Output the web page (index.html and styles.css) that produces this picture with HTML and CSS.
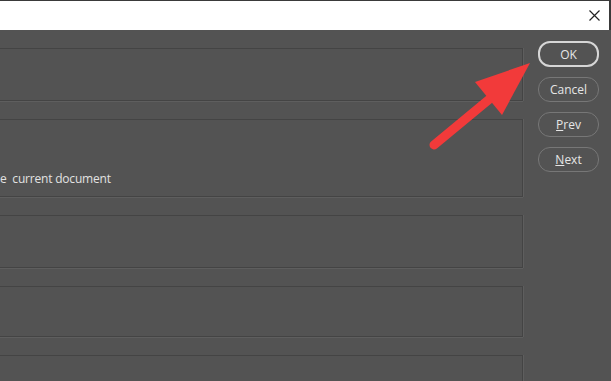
FILE: index.html
```html
<!DOCTYPE html>
<html lang="en">
<head>
    <meta charset="UTF-8">
    <title>Dialog</title>
    <link rel="stylesheet" href="styles.css">
</head>
<body>
<header class="titlebar">
    <svg class="close" width="11" height="11" viewBox="0 0 11 11">
        <path d="M0.5 0.5 L10.5 10.5 M10.5 0.5 L0.5 10.5" stroke="#222" stroke-width="1.2" fill="none"/>
    </svg>
</header>
<div class="dialog">
    <div class="groups">
        <div class="group g1"></div>
        <div class="group g2">
            <span class="label">e&nbsp; current document</span>
        </div>
        <div class="group g3"></div>
        <div class="group g4"></div>
        <div class="group g5"></div>
    </div>
    <div class="buttons">
        <button class="btn default">OK</button>
        <button class="btn">Cancel</button>
        <button class="btn"><u>P</u>rev</button>
        <button class="btn"><u>N</u>ext</button>
    </div>
    <!-- callout arrow pointing at OK -->
    <svg class="arrow" width="611" height="381" viewBox="0 0 611 381">
        <line x1="434" y1="145" x2="492" y2="97" stroke="#f23a3a" stroke-width="9" stroke-linecap="round"/>
        <polygon points="530,63 475,82 502,115" fill="#f23a3a"/>
    </svg>
</div>
</body>
</html>
```

FILE: styles.css
```css
body {
    margin: 0;
    width: 611px;
    height: 381px;
    overflow: hidden;
    background-color: #535353;
    font-family: "Open Sans", "Noto Sans", sans-serif;
    font-size: 12px;
    color: #e2e2e2;
}

.titlebar {
    height: 29px;
    background-color: #fff;
    border-top: 1px solid #3a3a3a;
    border-right: 2px solid #3a3a3a;
    display: flex;
    justify-content: flex-end;
    align-items: center;
    padding-right: 9px;
}

.dialog {
    display: flex;
    position: relative;
    height: 351px;
}

.groups {
    width: 523px;
    padding-top: 18px;
    display: flex;
    flex-direction: column;
    gap: 18px;
}

.group {
    border: 1px solid #444;
    border-left: none;
    box-shadow: 0 1px 0 #5e5e5e, 1px 0 0 #5e5e5e;
    box-sizing: border-box;
    flex-shrink: 0;
}

.g1 { height: 53px; }
.g2 {
    height: 78px;
    display: flex;
    align-items: flex-end;
    padding-bottom: 9px;
}
.g3 { height: 53px; }
.g4 { height: 51px; }
.g5 { height: 40px; }

.label {
    line-height: 16px;
    letter-spacing: -0.2px;
}

.buttons {
    margin-left: 15px;
    padding-top: 11px;
    display: flex;
    flex-direction: column;
    gap: 10px;
}

.btn {
    width: 61px;
    height: 25px;
    border: 1px solid #777;
    border-radius: 12px;
    background-color: #535353;
    color: #e6e6e6;
    font-family: inherit;
    font-size: 12px;
    padding: 0;
}

.btn.default {
    border: 2px solid #d6d6d6;
    height: 26px;
}

.arrow {
    position: absolute;
    left: 0;
    top: -30px;
    pointer-events: none;
}
```
